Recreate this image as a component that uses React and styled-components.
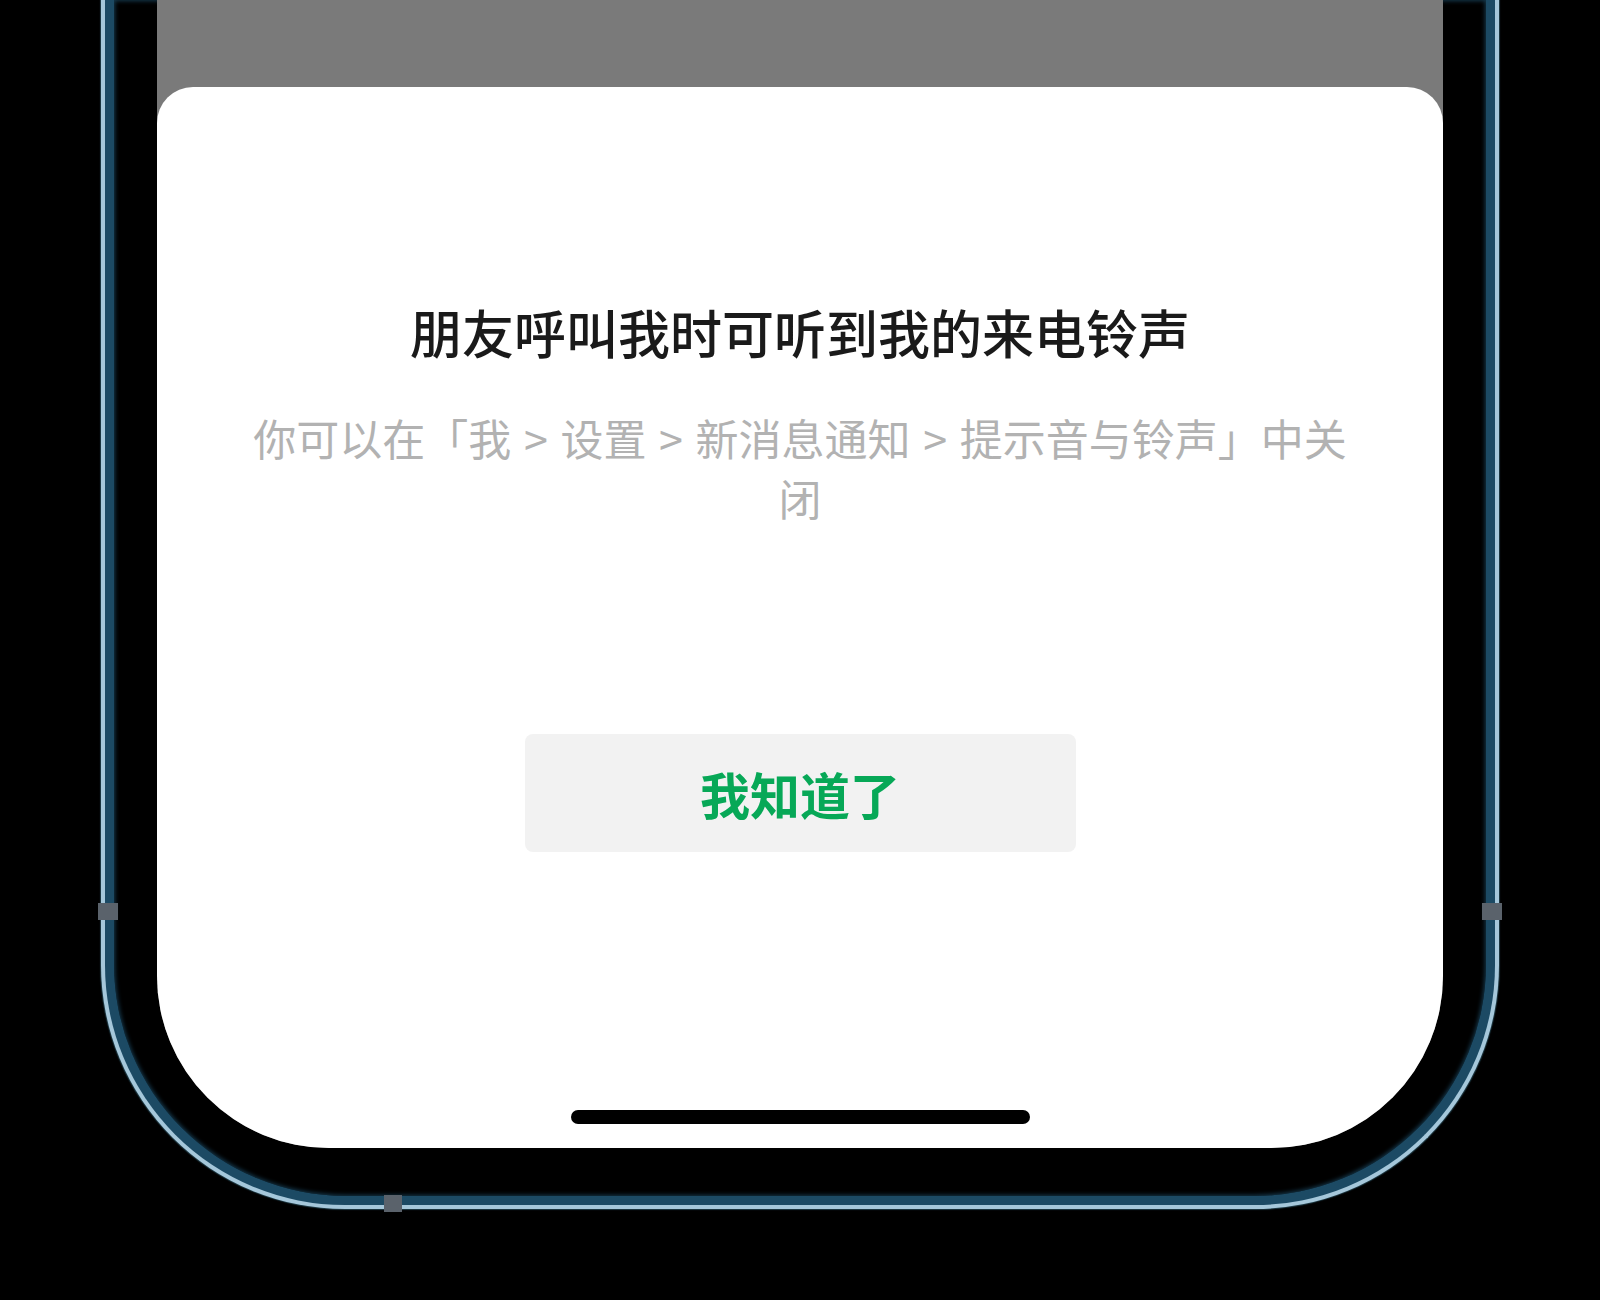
import React from "react";
import styled, { createGlobalStyle } from "styled-components";

const Global = createGlobalStyle`
  html, body {
    margin: 0;
    padding: 0;
    background: #000;
  }
  body {
    width: 1600px;
    height: 1300px;
    overflow: hidden;
    font-family: "Noto Sans CJK SC", "Noto Sans", sans-serif;
  }
  * { box-sizing: border-box; }
`;

const Page = styled.div`
  width: 1600px;
  height: 1300px;
  background: #000;
`;

const Bezel = styled.div`
  position: relative;
  margin-left: 101px;
  width: 1398px;
  height: 1209px;
  border: 4px solid #a5c7da;
  border-top: 0;
  border-radius: 0 0 244px 244px;
  background: #1c4a64;
  padding: 0 9px 9px 9px;
  box-shadow: 0 0 1px 1px rgba(90, 170, 200, 0.35);
`;

const Band = styled.div`
  height: 100%;
  background: #000;
  border-radius: 0 0 232px 232px;
  padding: 0 43px 48px 43px;
  box-shadow: inset 0 0 4px 1px rgba(28, 74, 100, 0.8);
`;

const Screen = styled.div`
  height: 100%;
  background: #7a7a7a;
  border-radius: 0 0 172px 172px;
  overflow: hidden;
  padding-top: 87px;
  display: flex;
  flex-direction: column;
`;

const Sheet = styled.div`
  flex: 1;
  background: #fff;
  border-radius: 36px 36px 0 0;
  display: flex;
  flex-direction: column;
  align-items: center;
  padding-top: 209px;
`;

const Title = styled.div`
  font-size: 52px;
  line-height: 72px;
  font-weight: 500;
  color: #1a1a1a;
  text-align: center;
`;

const Desc = styled.div`
  margin-top: 39px;
  width: 1110px;
  font-size: 43px;
  line-height: 60px;
  word-spacing: 3px;
  color: #b2b2b2;
  text-align: center;
`;

const Button = styled.button`
  margin-top: 207px;
  width: 551px;
  height: 118px;
  border: 0;
  border-radius: 8px;
  background: #f2f2f2;
  color: #07a857;
  font-family: "Noto Sans CJK SC", "Noto Sans", sans-serif;
  font-size: 50px;
  font-weight: 600;
  display: flex;
  align-items: center;
  justify-content: center;
  padding: 0;
`;

const HomeIndicator = styled.div`
  margin-top: auto;
  margin-bottom: 24px;
  width: 459px;
  height: 14px;
  border-radius: 7px;
  background: #000;
`;

const Antenna = styled.div`
  position: absolute;
  width: ${(p) => p.$w}px;
  height: 17px;
  left: ${(p) => p.$x}px;
  top: ${(p) => p.$y}px;
  background: #5a626b;
`;

export default function App() {
  return (
    <Page>
      <Global />
      <Bezel>
        <Band>
          <Screen>
            <Sheet>
              <Title>朋友呼叫我时可听到我的来电铃声</Title>
              <Desc>你可以在「我 &gt; 设置 &gt; 新消息通知 &gt; 提示音与铃声」中关闭</Desc>
              <Button>我知道了</Button>
              <HomeIndicator />
            </Sheet>
          </Screen>
        </Band>
        <Antenna $x={-7} $y={903} $w={20} />
        <Antenna $x={1377} $y={903} $w={20} />
        <Antenna $x={279} $y={1195} $w={18} />
      </Bezel>
    </Page>
  );
}
